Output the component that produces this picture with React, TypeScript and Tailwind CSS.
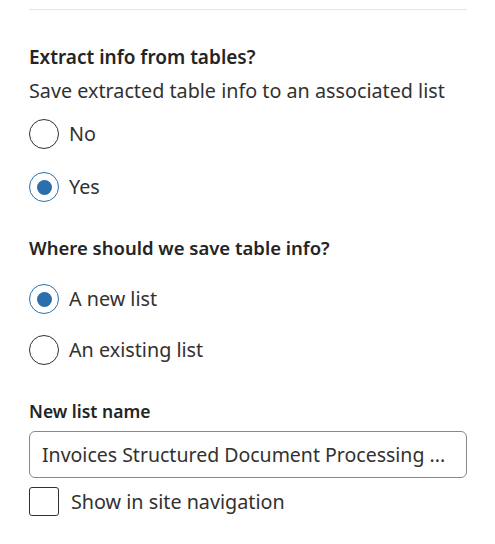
import { useState } from "react";

function Radio({ label, checked, onSelect }: { label: string; checked: boolean; onSelect: () => void }) {
  return (
    <div className="flex items-center h-[30px] cursor-pointer" onClick={onSelect}>
      <span
        className={
          checked
            ? "w-[30px] h-[30px] rounded-full border border-[#2b70ad] flex items-center justify-center"
            : "w-[30px] h-[30px] rounded-full border border-[#323130] flex items-center justify-center"
        }
      >
        {checked && <span className="w-[15px] h-[15px] rounded-full bg-[#2b70ad]" />}
      </span>
      <span className="ml-[10px] text-[19.75px] leading-[28px] text-[#323130]">{label}</span>
    </div>
  );
}

export default function App() {
  const [extract, setExtract] = useState("yes");
  const [target, setTarget] = useState("new");
  const [showNav, setShowNav] = useState(false);

  return (
    <div className="w-[495px] h-[544px] bg-white pl-[29px] pr-[28px] pt-[9px] font-['Noto_Sans',sans-serif] text-[#242424]">
      <div className="h-px bg-[#e6e6e6]" />

      <div className="mt-[33px] text-[19px] leading-[28px] font-semibold">Extract info from tables?</div>
      <div className="mt-[6px] text-[19.75px] leading-[28px] text-[#323130]">Save extracted table info to an associated list</div>

      <div className="mt-[14px] flex flex-col gap-[23px]">
        <Radio label="No" checked={extract === "no"} onSelect={() => setExtract("no")} />
        <Radio label="Yes" checked={extract === "yes"} onSelect={() => setExtract("yes")} />
      </div>

      <div className="mt-[32px] text-[18.5px] leading-[28px] font-semibold">Where should we save table info?</div>

      <div className="mt-[22px] flex flex-col gap-[21px]">
        <Radio label="A new list" checked={target === "new"} onSelect={() => setTarget("new")} />
        <Radio label="An existing list" checked={target === "existing"} onSelect={() => setTarget("existing")} />
      </div>

      <div className="mt-[34px] text-[17.5px] leading-[24px] font-semibold">New list name</div>
      <div className="mt-[8px] h-[47px] rounded-[6px] border border-[#8a8886] flex items-center px-[12px] overflow-hidden">
        <span className="whitespace-nowrap text-[19.5px] leading-[28px] text-[#323130]">
          Invoices Structured Document Processing ...
        </span>
      </div>

      <label className="mt-[9px] flex items-center cursor-pointer">
        <input type="checkbox" className="hidden" checked={showNav} onChange={() => setShowNav(!showNav)} />
        <span className="w-[30px] h-[29px] rounded-[3px] border border-[#323130]" />
        <span className="ml-[12px] text-[19.75px] leading-[28px] text-[#323130]">Show in site navigation</span>
      </label>
    </div>
  );
}
